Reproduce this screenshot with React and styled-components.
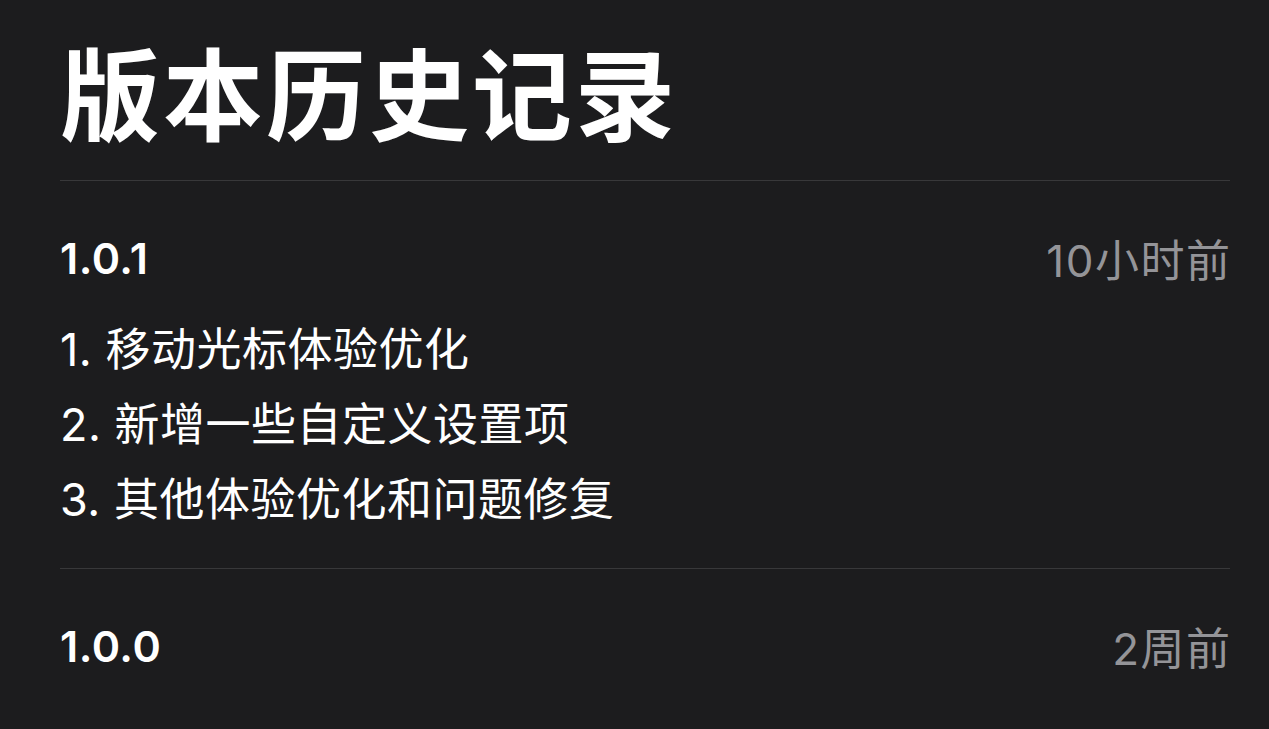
import React from 'react';
import styled, { createGlobalStyle } from 'styled-components';

const GlobalStyle = createGlobalStyle`
  html, body {
    margin: 0;
    padding: 0;
    background-color: #1c1c1e;
  }
  body {
    font-family: Inter, "Noto Sans CJK SC", "Noto Sans", sans-serif;
    color: #ffffff;
  }
`;

const Page = styled.div`
  min-height: 729px;
  padding: 30px 39px 0 60px;
  box-sizing: border-box;
`;

const Title = styled.h1`
  margin: 0;
  font-family: "Noto Sans CJK SC", sans-serif;
  font-size: 100px;
  line-height: 120px;
  font-weight: 600;
  letter-spacing: 3px;
`;

const Divider = styled.hr`
  border: none;
  height: 1px;
  background-color: #38383a;
  margin: ${(p) => p.$top || 0}px 0 0 0;
`;

const Release = styled.section`
  padding-top: 47px;
`;

const ReleaseHead = styled.div`
  display: flex;
  justify-content: space-between;
  align-items: center;
  height: 60px;
`;

const Version = styled.span`
  font-size: 43px;
  font-weight: 600;
  letter-spacing: 0.5px;
`;

const When = styled.span`
  font-size: 44px;
  font-weight: 400;
  letter-spacing: 1.5px;
  margin-right: -1.5px;
  color: #949498;
`;

const Notes = styled.ol`
  list-style: none;
  margin: 24px 0 0 0;
  padding: 0;
`;

const Note = styled.li`
  font-size: 45px;
  line-height: 75px;
  font-weight: 400;
  letter-spacing: 0.5px;
`;

const releases = [
  {
    version: '1.0.1',
    when: '10小时前',
    notes: ['移动光标体验优化', '新增一些自定义设置项', '其他体验优化和问题修复'],
  },
  { version: '1.0.0', when: '2周前', notes: [] },
];

const App = () => (
  <>
    <GlobalStyle />
    <Page>
      <Title>版本历史记录</Title>
      <Divider $top={30} />
      {releases.map((r, i) => (
        <React.Fragment key={r.version}>
          <Release>
            <ReleaseHead>
              <Version>{r.version}</Version>
              <When>{r.when}</When>
            </ReleaseHead>
            {r.notes.length > 0 && (
              <Notes>
                {r.notes.map((n, j) => (
                  <Note key={n}>
                    {j + 1}. {n}
                  </Note>
                ))}
              </Notes>
            )}
          </Release>
          {i < releases.length - 1 && <Divider $top={31} />}
        </React.Fragment>
      ))}
    </Page>
  </>
);

export default App;
